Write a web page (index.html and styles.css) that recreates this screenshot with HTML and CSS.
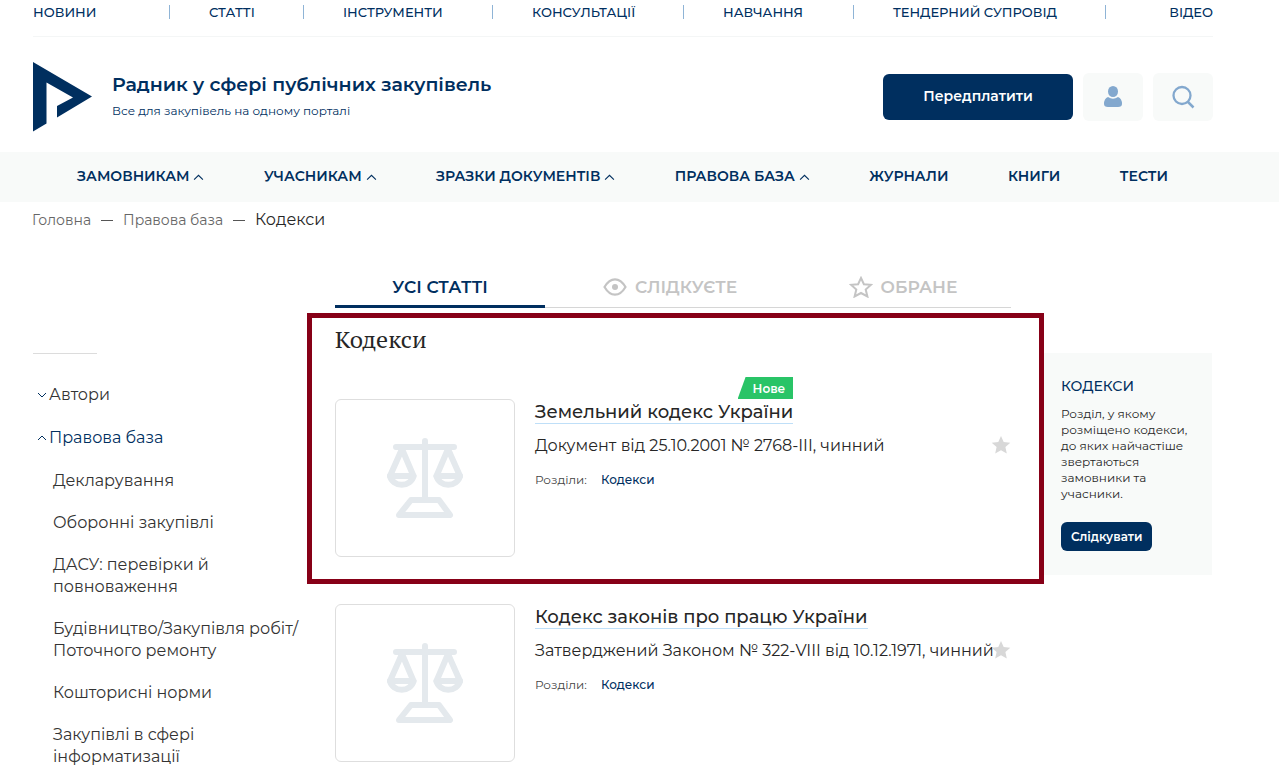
FILE: index.html
```html
<!DOCTYPE html>
<html lang="uk">

<head>
    <meta charset="UTF-8">
    <meta name="viewport" content="width=device-width, initial-scale=1.0">
    <title>Кодекси</title>
    <link rel="stylesheet" href="styles.css">
</head>

<body>

    <!-- Shared icons -->
    <svg class="sprite" aria-hidden="true">
        <symbol id="up" viewBox="0 0 10 6">
            <path d="M1 5l4-4 4 4" fill="none" stroke="currentColor" />
        </symbol>
        <symbol id="scales" viewBox="0 0 76 80">
            <g fill="none" stroke="currentColor" stroke-width="6" stroke-linecap="round" stroke-linejoin="round">
                <path d="M9 9h58M38 3v56" />
                <path d="M24 62h28l11 15H12z" />
                <path d="M15 11L3 38h23.500zM61 11L49.500 38H73z" />
                <path d="M3 38a12 11 0 0 0 23.500 0M49.500 38a12 11 0 0 0 23.500 0" />
            </g>
        </symbol>
        <symbol id="star" viewBox="0 0 20 20">
            <path d="M10 1l2.7 6 6.6.7-4.9 4.4 1.4 6.5L10 15.300l-5.800 3.300 1.400-6.500L.7 7.700l6.600-.7z" fill="currentColor" />
        </symbol>
    </svg>

    <!-- Top links -->
    <nav class="top-nav">
        <a href="#">НОВИНИ</a>
        <a href="#">СТАТТІ</a>
        <a href="#">ІНСТРУМЕНТИ</a>
        <a href="#">КОНСУЛЬТАЦІЇ</a>
        <a href="#">НАВЧАННЯ</a>
        <a href="#">ТЕНДЕРНИЙ СУПРОВІД</a>
        <a href="#">ВІДЕО</a>
    </nav>

    <!-- Header -->
    <header class="header">
        <a class="logo" href="#" aria-label="Радник">
            <svg width="59" height="70" viewBox="0 0 59 70">
                <path d="M0 0L59 34.500 24 55.500V44L40 35.500 13.500 20.500V61.500L0 69.500z" fill="#002f5f" />
            </svg>
        </a>
        <div class="brand">
            <div class="brand-title">Радник у сфері публічних закупівель</div>
            <div class="brand-text">Все для закупівель на одному порталі</div>
        </div>
        <button class="btn subscribe" type="button">Передплатити</button>
        <button class="icon-btn" type="button" aria-label="Кабінет">
            <svg width="20" height="22" viewBox="0 0 20 22">
                <ellipse cx="10" cy="5.500" rx="5" ry="5.500" fill="currentColor" />
                <path d="M5 11q5 3.500 10 0 4 1.500 4 7 0 3-4 3H5q-4 0-4-3 0-5.500 4-7z" fill="currentColor" />
            </svg>
        </button>
        <button class="icon-btn" type="button" aria-label="Пошук">
            <svg width="24" height="24" viewBox="0 0 24 24" fill="none" stroke="currentColor" stroke-width="2.300">
                <circle cx="11" cy="10.500" r="8.500" />
                <path d="M17 17l5.500 5.500" stroke-width="2.500" />
            </svg>
        </button>
    </header>

    <!-- Main menu -->
    <nav class="main-nav">
        <a href="#">ЗАМОВНИКАМ <svg width="11" height="7"><use href="#up" /></svg></a>
        <a href="#">УЧАСНИКАМ <svg width="11" height="7"><use href="#up" /></svg></a>
        <a href="#">ЗРАЗКИ ДОКУМЕНТІВ <svg width="11" height="7"><use href="#up" /></svg></a>
        <a href="#">ПРАВОВА БАЗА <svg width="11" height="7"><use href="#up" /></svg></a>
        <a href="#">ЖУРНАЛИ</a>
        <a href="#">КНИГИ</a>
        <a href="#">ТЕСТИ</a>
    </nav>

    <div class="breadcrumbs">
        <a href="#">Головна</a>
        <span class="dash"></span>
        <a href="#">Правова база</a>
        <span class="dash"></span>
        <span class="current">Кодекси</span>
    </div>

    <div class="content">
        <!-- Left menu -->
        <nav class="sidebar">
            <ul class="menu">
                <li><a href="#"><svg class="down" width="10" height="6"><use href="#up" /></svg>Автори</a></li>
                <li class="active"><a href="#"><svg width="10" height="6"><use href="#up" /></svg>Правова база</a></li>
            </ul>
            <ul class="submenu">
                <li><a href="#">Декларування</a></li>
                <li><a href="#">Оборонні закупівлі</a></li>
                <li><a href="#">ДАСУ: перевірки й<br>повноваження</a></li>
                <li><a href="#">Будівництво/Закупівля робіт/<br>Поточного ремонту</a></li>
                <li><a href="#">Кошторисні норми</a></li>
                <li><a href="#">Закупівлі в сфері<br>інформатизації</a></li>
            </ul>
        </nav>

        <main>
            <div class="tabs">
                <button class="tab tab-active" type="button">УСІ СТАТТІ</button>
                <button class="tab tab-follow" type="button">
                    <svg width="24" height="18" viewBox="0 0 24 18">
                        <path d="M1.500 9Q6 1.300 12 1.300T22.500 9Q18 16.700 12 16.700T1.500 9z" fill="none" stroke="currentColor" stroke-width="2.200" />
                        <circle cx="12" cy="9" r="3" fill="currentColor" />
                    </svg>
                    СЛІДКУЄТЕ
                </button>
                <button class="tab" type="button">
                    <svg width="24" height="22" viewBox="0 0 24 22">
                        <path d="M12 2l2.900 6.200 7.100.6-5.300 4.700 1.700 7L12 17l-6.400 3.500 1.700-7L2 8.800l7.100-.6z" fill="none" stroke="currentColor" stroke-width="2" />
                    </svg>
                    ОБРАНЕ
                </button>
            </div>

            <section class="highlight">
                <h1>Кодекси</h1>
                <article class="article">
                    <a class="thumb" href="#" aria-label="Земельний кодекс України"><svg width="76" height="80"><use href="#scales" /></svg></a>
                    <div class="info">
                        <h2><a href="#">Земельний кодекс України</a><span class="badge">Нове</span></h2>
                        <p class="doc">Документ від 25.10.2001 № 2768-III, чинний</p>
                        <p class="sections">Розділи: <a href="#">Кодекси</a></p>
                        <button class="fav" type="button" aria-label="Обране"><svg width="20" height="20"><use href="#star" /></svg></button>
                    </div>
                </article>
            </section>

            <article class="article article-next">
                <a class="thumb" href="#" aria-label="Кодекс законів про працю України"><svg width="76" height="80"><use href="#scales" /></svg></a>
                <div class="info">
                    <h2><a href="#">Кодекс законів про працю України</a></h2>
                    <p class="doc">Затверджений Законом № 322-VIII від 10.12.1971, чинний</p>
                    <p class="sections">Розділи: <a href="#">Кодекси</a></p>
                    <button class="fav" type="button" aria-label="Обране"><svg width="20" height="20"><use href="#star" /></svg></button>
                </div>
            </article>
        </main>

        <!-- Section info -->
        <aside class="about">
            <h3>КОДЕКСИ</h3>
            <p>Розділ, у якому розміщено кодекси, до яких найчастіше звертаються замовники та учасники.</p>
            <button class="btn follow" type="button">Слідкувати</button>
        </aside>
    </div>

</body>

</html>
```
FILE: styles.css
```css
/* General Reset */
* {
    margin: 0;
    padding: 0;
    box-sizing: border-box;
}

body {
    font-family: Montserrat, Inter, "Open Sans", sans-serif;
    font-size: 16px;
    color: #262626;
    background: #fff;
    overflow-x: hidden;
}

a {
    color: inherit;
    text-decoration: none;
}

ul {
    list-style: none;
}

button {
    font-family: inherit;
    border: none;
    background: none;
    cursor: pointer;
}

.sprite {
    position: absolute;
    width: 0;
    height: 0;
}

/* Top links */
.top-nav {
    display: grid;
    grid-template-columns: 136fr 134fr 189fr 191fr 170fr 252fr 108fr;
    margin: 0 66px 0 33px;
    padding: 5px 0 17px;
    border-bottom: 1px solid #f4f6f6;
    font-size: 13px;
    line-height: 14px;
    font-weight: 500;
    color: #002f5f;
}

.top-nav a {
    padding-left: 39px;
    border-left: 1px solid #8fb4d6;
    white-space: nowrap;
}

.top-nav a:first-child {
    padding-left: 0;
    border-left: none;
}

.top-nav a:last-child {
    text-align: right;
}

/* Header */
.header {
    display: flex;
    align-items: center;
    gap: 10px;
    height: 115px;
    margin: 0 66px 0 33px;
    padding-top: 4px;
}

.logo svg {
    display: block;
}

.brand {
    flex: 1;
    padding: 0 0 2px 10px;
    color: #002f5f;
}

.brand-title {
    font-size: 19px;
    line-height: 26px;
    font-weight: 600;
}

.brand-text {
    margin-top: 4px;
    font-size: 12px;
    line-height: 18px;
}

.btn {
    background: #002f5f;
    color: #fff;
    font-weight: 600;
    border-radius: 6px;
}

.subscribe {
    width: 190px;
    height: 46px;
    padding-bottom: 2px;
    font-size: 14px;
}

.icon-btn {
    display: flex;
    align-items: center;
    justify-content: center;
    width: 60px;
    height: 48px;
    border-radius: 6px;
    background: #f8faf9;
    color: #83a8ce;
}

/* Main menu */
.main-nav {
    display: flex;
    justify-content: space-between;
    padding: 0 111px 2px 77px;
    background: #f8faf9;
    color: #002f5f;
    font-size: 14px;
    line-height: 48px;
    font-weight: 600;
    white-space: nowrap;
}

/* Breadcrumbs */
.breadcrumbs {
    display: flex;
    align-items: center;
    gap: 10px;
    padding: 7px 67px 5px 32px;
    font-size: 14px;
    line-height: 22px;
    color: #666;
}

.dash {
    width: 12px;
    height: 1px;
    background: #555;
}

.current {
    font-size: 16px;
    color: #262626;
}

/* Columns */
.content {
    display: grid;
    grid-template-columns: 274px 1fr 168px;
    align-items: start;
    padding: 28px 67px 0 33px;
}

/* Left menu */
.sidebar {
    margin-top: 89px;
    line-height: 22px;
    color: #333;
}

.sidebar::before {
    content: "";
    display: block;
    width: 64px;
    height: 1px;
    margin-bottom: 30px;
    background: #dcdcdc;
}

.menu {
    display: flex;
    flex-direction: column;
    gap: 21px;
    padding-left: 4px;
}

.menu a {
    display: flex;
    align-items: center;
    gap: 2px;
}

.menu svg {
    color: #002f5f;
}

.menu .down {
    transform: rotate(180deg);
}

.active {
    color: #002f5f;
}

.submenu {
    display: flex;
    flex-direction: column;
    gap: 20px;
    padding: 21px 0 0 20px;
    white-space: nowrap;
}

/* Tabs */
.tabs {
    display: flex;
    margin: 0 33px 5px 28px;
    border-bottom: 1px solid #d6d6d6;
}

.tab {
    display: flex;
    flex: 216;
    align-items: center;
    justify-content: center;
    gap: 8px;
    height: 43px;
    padding-top: 2px;
    font-size: 17px;
    font-weight: 600;
    color: #c4c4c4;
}

.tab-active {
    flex: 210;
    margin-bottom: -1px;
    height: 44px;
    padding-top: 4px;
    border-bottom: 3px solid #002f5f;
    color: #002f5f;
}

.tab-follow {
    flex: 250;
}

/* Articles */
.highlight {
    padding: 5px 28px 22px 23px;
    border: 5px solid #870017;
}

.highlight h1 {
    margin-bottom: 44px;
    font-family: "PT Serif", "Liberation Serif", serif;
    font-size: 24px;
    line-height: 32px;
    font-weight: 400;
}

.article {
    display: flex;
    gap: 20px;
}

.article-next {
    margin: 20px 33px 0 28px;
}

.thumb {
    display: flex;
    flex-shrink: 0;
    align-items: center;
    justify-content: center;
    width: 180px;
    height: 158px;
    border: 1px solid #dedede;
    border-radius: 6px;
    color: #e4e9ed;
}

.info {
    position: relative;
    flex: 1;
    white-space: nowrap;
}

.info h2 {
    position: relative;
    width: fit-content;
    padding-top: 2px;
    font-size: 18px;
    line-height: 22px;
    font-weight: 500;
    border-bottom: 1px solid #bfdff8;
}

.badge {
    position: absolute;
    right: 0;
    bottom: 100%;
    padding: 1px 8px 0 15px;
    background: #29c467;
    clip-path: polygon(8px 0, 100% 0, 100% 100%, 0 100%);
    color: #fff;
    font-size: 12px;
    line-height: 21px;
    font-weight: 600;
}

.doc {
    margin-top: 11px;
    line-height: 22px;
}

.sections {
    margin-top: 14px;
    font-size: 12px;
    line-height: 18px;
    color: #444;
}

.sections a {
    margin-left: 11px;
    font-weight: 500;
    color: #002f5f;
}

.fav {
    position: absolute;
    top: 36px;
    right: 0;
    height: 20px;
    color: #d8d8d8;
}

/* Section info */
.about {
    margin-top: 89px;
    padding: 24px 20px 24px 17px;
    background: #f8faf9;
}

.about h3 {
    margin-bottom: 11px;
    font-size: 14px;
    line-height: 18px;
    font-weight: 500;
    color: #002f5f;
}

.about p {
    font-size: 12px;
    line-height: 16px;
}

.follow {
    margin-top: 20px;
    padding: 0 10px;
    font-size: 12px;
    line-height: 29px;
}
```
